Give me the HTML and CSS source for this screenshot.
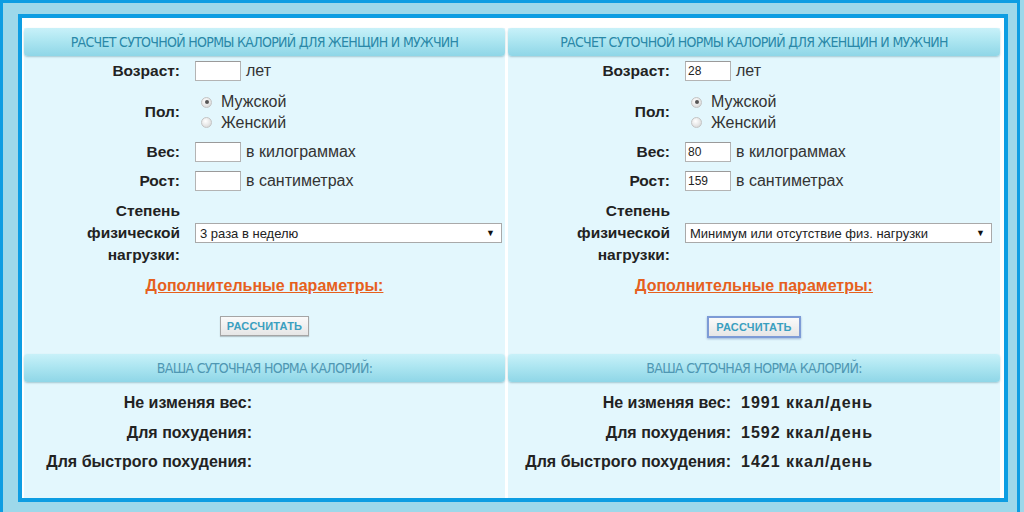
FILE: index.html
```html
<!DOCTYPE html>
<html lang="ru">
<head>
<meta charset="utf-8">
<title>Калькулятор калорий</title>
<link rel="stylesheet" href="styles.css">
</head>
<body>
<div class="frame">
  <div class="box">
    <section class="panel panel--a">
      <h2 class="head">РАСЧЕТ СУТОЧНОЙ НОРМЫ КАЛОРИЙ ДЛЯ ЖЕНЩИН И МУЖЧИН</h2>
      <div class="body">
        <div class="form">
          <div class="lbl">Возраст:</div>
          <div class="fld"><span class="inp"></span><span class="unit">лет</span></div>
          <div class="lbl">Пол:</div>
          <div class="fld radios">
            <label class="radio"><span class="dot on"></span>Мужской</label>
            <label class="radio"><span class="dot"></span>Женский</label>
          </div>
          <div class="lbl">Вес:</div>
          <div class="fld"><span class="inp"></span><span class="unit">в килограммах</span></div>
          <div class="lbl">Рост:</div>
          <div class="fld"><span class="inp"></span><span class="unit">в сантиметрах</span></div>
          <div class="lbl multi">Степень<br>физической<br>нагрузки:</div>
          <div class="fld"><span class="sel"><span>3 раза в неделю</span><span class="arr">▼</span></span></div>
        </div>
        <a class="more">Дополнительные параметры:</a>
        <span class="btn">РАССЧИТАТЬ</span>
      </div>
      <h2 class="head head--sub">ВАША СУТОЧНАЯ НОРМА КАЛОРИЙ:</h2>
      <div class="res">
        <div class="rl">Не изменяя вес:</div><div class="rv"></div>
        <div class="rl">Для похудения:</div><div class="rv"></div>
        <div class="rl">Для быстрого похудения:</div><div class="rv"></div>
      </div>
    </section>
    <section class="panel panel--b">
      <h2 class="head">РАСЧЕТ СУТОЧНОЙ НОРМЫ КАЛОРИЙ ДЛЯ ЖЕНЩИН И МУЖЧИН</h2>
      <div class="body">
        <div class="form">
          <div class="lbl">Возраст:</div>
          <div class="fld"><span class="inp">28</span><span class="unit">лет</span></div>
          <div class="lbl">Пол:</div>
          <div class="fld radios">
            <label class="radio"><span class="dot on"></span>Мужской</label>
            <label class="radio"><span class="dot"></span>Женский</label>
          </div>
          <div class="lbl">Вес:</div>
          <div class="fld"><span class="inp">80</span><span class="unit">в килограммах</span></div>
          <div class="lbl">Рост:</div>
          <div class="fld"><span class="inp">159</span><span class="unit">в сантиметрах</span></div>
          <div class="lbl multi">Степень<br>физической<br>нагрузки:</div>
          <div class="fld"><span class="sel"><span>Минимум или отсутствие физ. нагрузки</span><span class="arr">▼</span></span></div>
        </div>
        <a class="more">Дополнительные параметры:</a>
        <span class="btn btn--focus">РАССЧИТАТЬ</span>
      </div>
      <h2 class="head head--sub">ВАША СУТОЧНАЯ НОРМА КАЛОРИЙ:</h2>
      <div class="res">
        <div class="rl">Не изменяя вес:</div><div class="rv">1991 ккал/день</div>
        <div class="rl">Для похудения:</div><div class="rv">1592 ккал/день</div>
        <div class="rl">Для быстрого похудения:</div><div class="rv">1421 ккал/день</div>
      </div>
    </section>
  </div>
</div>
</body>
</html>
```

FILE: styles.css
```css
* { box-sizing: border-box; }
html, body { margin: 0; padding: 0; }
body {
  background: #9dd8ea;
  width: 1024px;
  height: 512px;
  overflow: hidden;
  font-family: "Liberation Sans", Arial, sans-serif;
  color: #222;
}
.frame {
  width: 1020px;
  height: 530px;
  border: 3px solid #0d9de2;
  border-bottom: 0;
  padding: 11px 0 0 15px;
}
.box {
  width: 990px;
  height: 488px;
  border: 4px solid #0d9de2;
  background: #fff;
  padding: 10px 4px 0 2px;
  display: flex;
  gap: 3px;
}
.panel {
  display: flex;
  flex-direction: column;
  background: #e3f7fd;
  --lw: 156px;
  --pr: 3px;
  --rw: 228px;
}
.panel--a { width: 481px; }
.panel--b { width: 492px; --lw: 162px; --pr: 8px; --rw: 223px; }

.head {
  margin: 0;
  height: 28px;
  line-height: 28px;
  text-align: center;
  font-family: "DejaVu Sans Condensed", "DejaVu Sans", sans-serif;
  font-stretch: condensed;
  font-weight: normal;
  font-size: 14px;
  letter-spacing: -0.7px;
  color: #2a88a8;
  background: linear-gradient(#c8f1f9 0%, #ade6f1 45%, #8fd6e7 100%);
  border-radius: 4px;
  box-shadow: 0 1px 2px rgba(40, 110, 130, 0.35);
  flex: none;
}
.head--sub { color: #4f97b3; }

.body {
  height: 298px;
  display: flex;
  flex-direction: column;
  align-items: center;
  padding-top: 5px;
  flex: none;
}
.form {
  align-self: stretch;
  display: grid;
  grid-template-columns: var(--lw) 1fr;
  column-gap: 15px;
  row-gap: 9px;
  padding-right: var(--pr);
  align-items: center;
  font-size: 16px;
}
.lbl {
  text-align: right;
  font-weight: bold;
  font-size: 15.5px;
  color: #222;
}
.lbl.multi { line-height: 22px; }
.fld {
  display: flex;
  align-items: center;
  height: 20px;
}
.radios {
  height: 43px;
  flex-direction: column;
  align-items: flex-start;
  padding-top: 2px;
}
.radio {
  display: flex;
  align-items: center;
  height: 21.5px;
  color: #333;
}
.dot {
  width: 11px;
  height: 11px;
  border-radius: 50%;
  margin: 0 9px 0 6px;
  border: 1px solid #c4c4c4;
  background: radial-gradient(circle at 40% 35%, #fff 0%, #e4e4e4 60%, #cfcfcf 100%);
  position: relative;
}
.dot.on::after {
  content: "";
  position: absolute;
  left: 2.5px;
  top: 2.5px;
  width: 4px;
  height: 4px;
  border-radius: 50%;
  background: #555;
}
.inp {
  width: 46px;
  height: 20px;
  border: 1px solid #b4b4b4;
  border-top-color: #9a9a9a;
  background: #fff;
  font-size: 12px;
  line-height: 18px;
  padding-left: 2px;
  color: #222;
}
.unit {
  margin-left: 5px;
  color: #333;
}
.sel {
  flex: 1;
  height: 20px;
  border: 1px solid #a9a9a9;
  background: #fff;
  display: flex;
  align-items: center;
  justify-content: space-between;
  font-size: 13px;
  padding: 0 6px 0 4px;
  color: #222;
}
.arr { font-size: 9px; color: #111; }
.more {
  margin-top: 11px;
  font-size: 16px;
  line-height: 18px;
  font-weight: bold;
  color: #e6601d;
  text-decoration: underline;
}
.btn {
  margin-top: 21px;
  height: 20px;
  padding: 0 6px;
  display: flex;
  align-items: center;
  font-size: 11px;
  font-weight: bold;
  letter-spacing: 0.2px;
  color: #3a9fc0;
  background: linear-gradient(#fafafa, #e6e6e6);
  border: 1px solid #a5a5a5;
  box-shadow: 0 1px 1px rgba(0, 0, 0, 0.2);
}
.btn--focus {
  border: 2px solid #7d9bd6;
  box-shadow: 0 1px 2px rgba(60, 90, 160, 0.4);
  padding: 0 7px;
  height: 22px;
}
.res {
  flex: 1;
  display: grid;
  grid-template-columns: var(--rw) auto;
  column-gap: 10px;
  row-gap: 9.5px;
  align-content: start;
  padding-top: 11px;
  font-size: 16px;
  font-weight: bold;
  line-height: 20px;
  color: #222;
}
.rl { text-align: right; }
.rv { letter-spacing: 1px; }
```
